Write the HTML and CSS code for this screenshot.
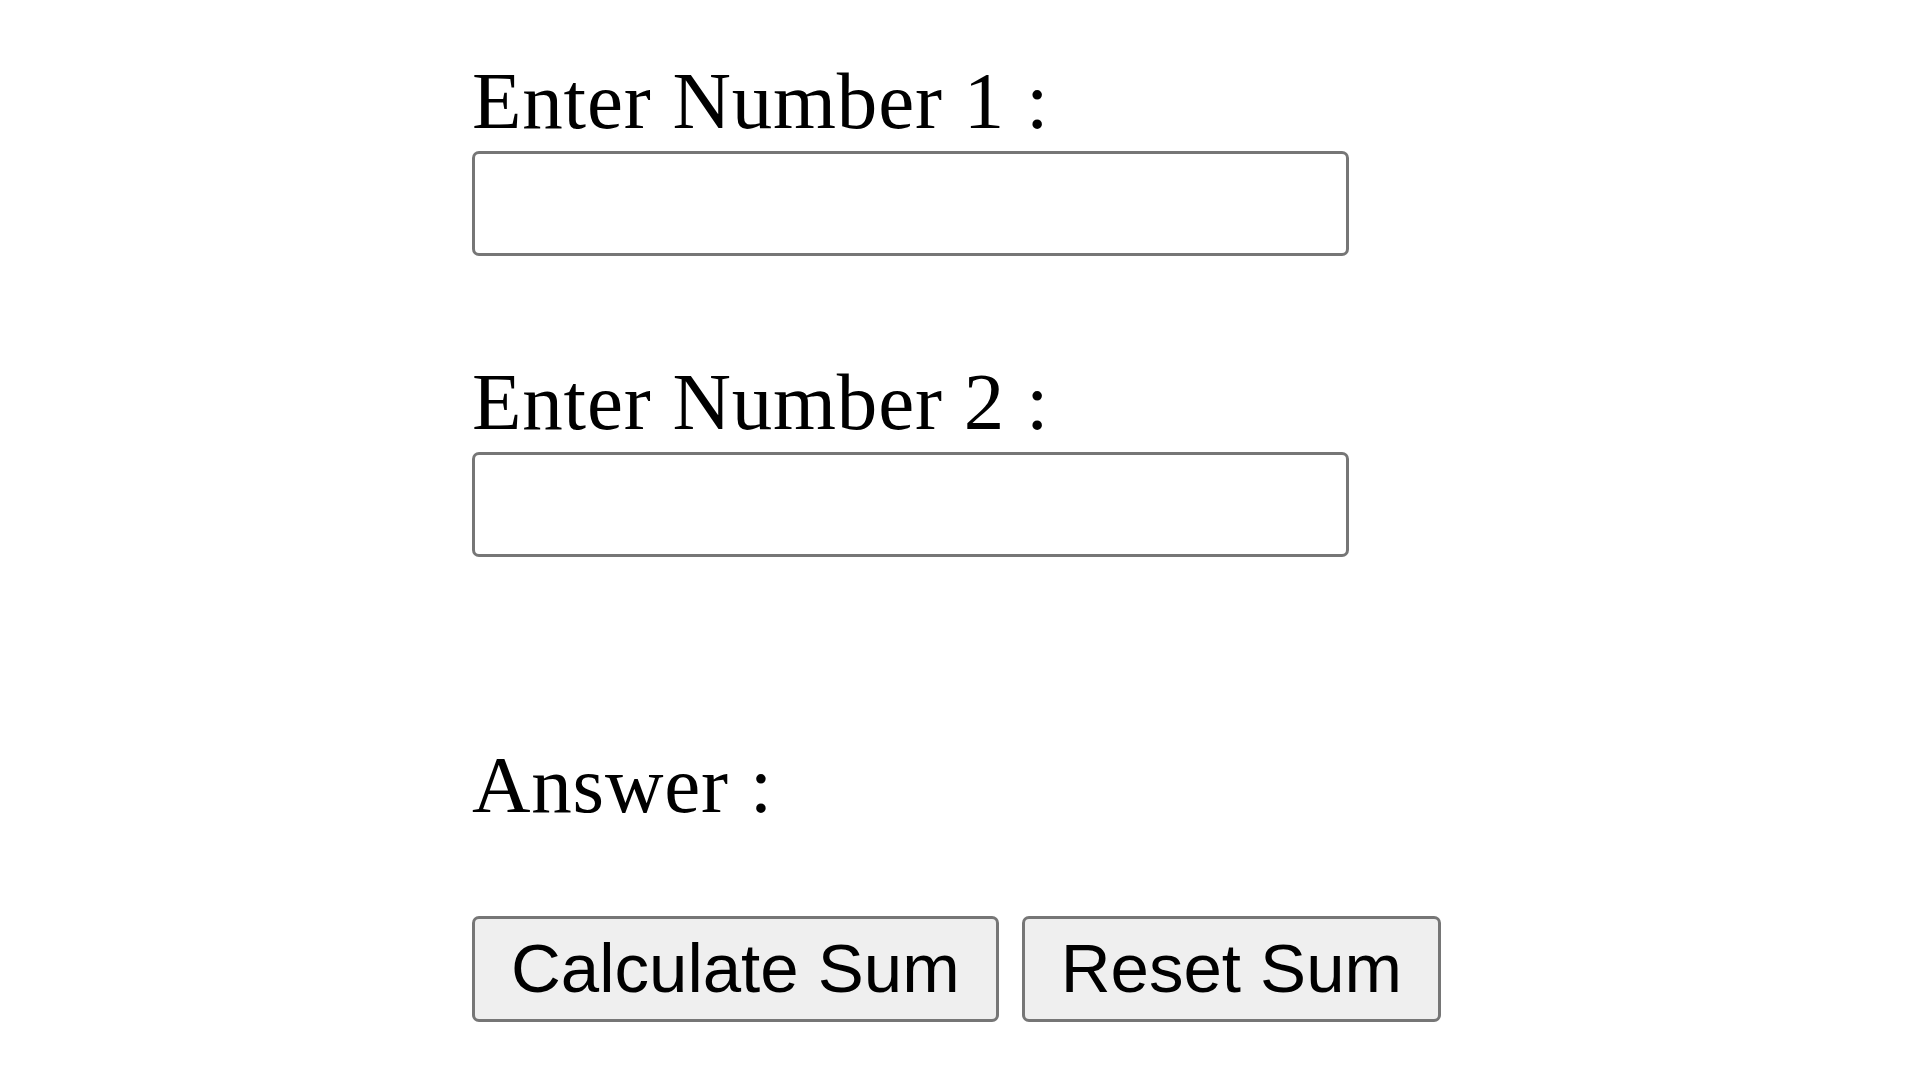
FILE: index.html
```html
<!DOCTYPE html>
<html lang="en">
<head>
<meta charset="utf-8">
<title>Sum Calculator</title>
<link rel="stylesheet" href="styles.css">
</head>
<body>
<main class="calc">
  <div class="field">
    <label class="label" for="n1">Enter Number 1 :</label>
    <input class="input" id="n1" type="text">
  </div>
  <div class="field field-second">
    <label class="label" for="n2">Enter Number 2 :</label>
    <input class="input" id="n2" type="text">
  </div>
  <div class="answer">Answer :</div>
  <div class="actions">
    <button class="btn" type="button">Calculate Sum</button>
    <button class="btn" type="button">Reset Sum</button>
  </div>
</main>
</body>
</html>
```
FILE: styles.css
```css
html, body {
  margin: 0;
  padding: 0;
  background: #ffffff;
}

.calc {
  display: flex;
  flex-direction: column;
  align-items: flex-start;
  padding: 55px 0 0 472px;
  font-family: "Liberation Serif", "Times New Roman", serif;
  color: #000000;
}

.field {
  display: flex;
  flex-direction: column;
  align-items: flex-start;
}

.field-second {
  margin-top: 100px;
}

.label {
  font-size: 81px;
  line-height: 93px;
  letter-spacing: 0.8px;
}

.input {
  box-sizing: border-box;
  width: 877px;
  height: 105px;
  margin: 3px 0 0 0;
  border: 3px solid #767676;
  border-radius: 7px;
  background: #ffffff;
  font-size: 40px;
  padding: 0 6px;
  outline: none;
}

.answer {
  margin-top: 182px;
  font-size: 81px;
  line-height: 93px;
  letter-spacing: 0.8px;
}

.actions {
  display: flex;
  gap: 23px;
  margin-top: 84px;
}

.btn {
  box-sizing: border-box;
  margin: 0;
  padding: 11px 36px;
  font-family: "Liberation Sans", Arial, sans-serif;
  font-size: 69px;
  line-height: 78px;
  color: #000000;
  background: #efefef;
  border: 3px solid #767676;
  border-radius: 7px;
}
```
